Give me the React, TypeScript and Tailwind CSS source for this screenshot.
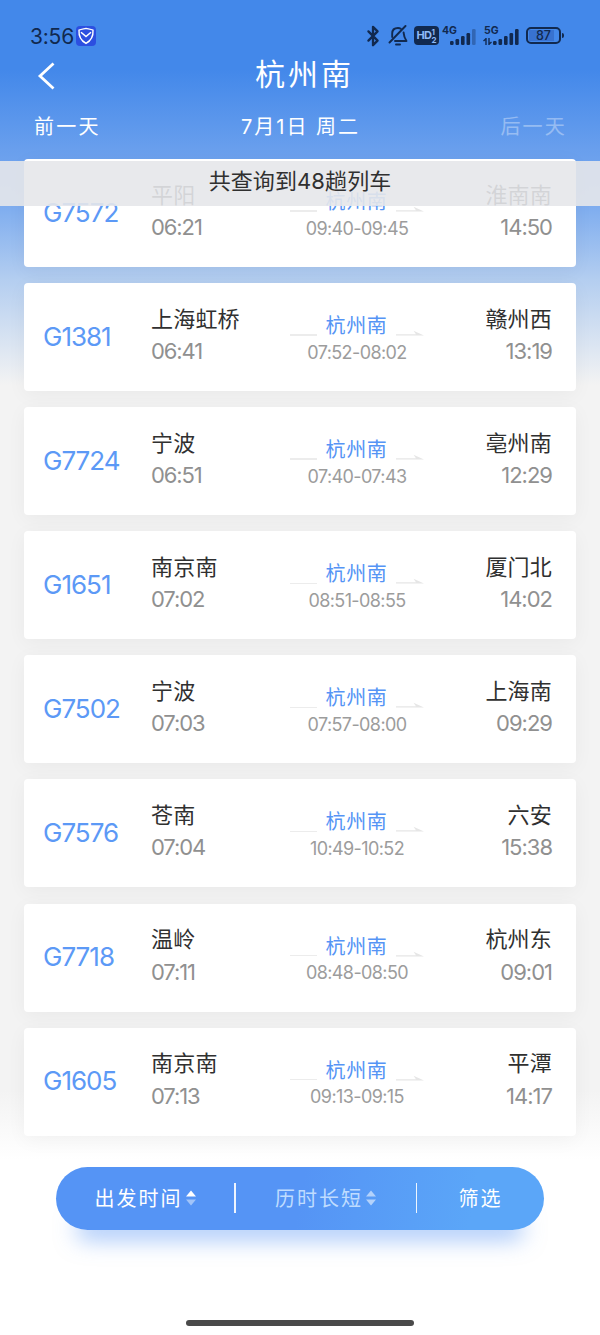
import React from 'react';
import { Bluetooth } from 'lucide-react';

interface Train {
  code: string;
  from: string;
  depart: string;
  to: string;
  arrive: string;
  stop: string;
}

const STATION = '杭州南';

const trains: Train[] = [
  { code: 'G7572', from: '平阳', depart: '06:21', to: '淮南南', arrive: '14:50', stop: '09:40-09:45' },
  { code: 'G1381', from: '上海虹桥', depart: '06:41', to: '赣州西', arrive: '13:19', stop: '07:52-08:02' },
  { code: 'G7724', from: '宁波', depart: '06:51', to: '亳州南', arrive: '12:29', stop: '07:40-07:43' },
  { code: 'G1651', from: '南京南', depart: '07:02', to: '厦门北', arrive: '14:02', stop: '08:51-08:55' },
  { code: 'G7502', from: '宁波', depart: '07:03', to: '上海南', arrive: '09:29', stop: '07:57-08:00' },
  { code: 'G7576', from: '苍南', depart: '07:04', to: '六安', arrive: '15:38', stop: '10:49-10:52' },
  { code: 'G7718', from: '温岭', depart: '07:11', to: '杭州东', arrive: '09:01', stop: '08:48-08:50' },
  { code: 'G1605', from: '南京南', depart: '07:13', to: '平潭', arrive: '14:17', stop: '09:13-09:15' },
];

const SignalBars: React.FC<{ weak?: boolean }> = ({ weak }) => (
  <svg width="26" height="16" viewBox="0 0 26 16" fill="#11294f">
    <rect x="0" y="12" width="3.6" height="4" rx="1.2" />
    <rect x="5.5" y="10" width="3.6" height="6" rx="1.2" />
    <rect x="11" y="7" width="3.6" height="9" rx="1.2" />
    <rect x="16.5" y="4" width="3.6" height="12" rx="1.2" />
    <rect x="22" y="0" width="3.6" height="16" rx="1.2" opacity={weak ? 0.35 : 1} />
  </svg>
);

const StatusBar: React.FC = () => (
  <div className="flex h-[56px] items-center pl-[30px] pr-9 pt-[15px] text-[#11294f]">
    <span className="mt-[1px] w-[46px] text-[21px] leading-none tracking-[-0.2px]">3:56</span>
    <svg width="20" height="20" viewBox="0 0 20 20" fill="none">
      <rect width="20" height="20" rx="4" fill="#2c4fe0" />
      <path d="M10 2.4 C12.5 3 15 3.2 17 4.2 C17.4 10 14.6 14.8 10 17.4 C5.4 14.8 2.6 10 3 4.2 C5 3.2 7.5 3 10 2.4 Z" stroke="#fff" strokeWidth="1.4" />
      <path d="M5 6.2 L10 10.5 L15 6.2" stroke="#fff" strokeWidth="1.5" />
    </svg>
    <div className="ml-auto flex items-center">
      <Bluetooth size={22} strokeWidth={2.5} className="mr-[4px]" />
      <svg width="20" height="21" viewBox="0 0 20 21" fill="none" stroke="#11294f" strokeWidth="1.9" strokeLinecap="round" strokeLinejoin="round">
        <path d="M4.2 12 V8.5 C4.2 5 6.3 3 10 3 C11 3 12 3.2 12.8 3.7" />
        <path d="M15.6 7.4 C15.8 10 15.8 12 18.5 16 H7" />
        <path d="M17.5 1 L1.5 17.5" />
        <path d="M8 19.5 H12" />
      </svg>
      <div className="ml-[6px] flex h-[19px] w-[25px] items-center justify-center rounded-[4px] bg-[#11294f] text-[#8fbaf7]">
        <span className="text-[11px] font-bold leading-none tracking-[-0.5px]">HD</span>
        <span className="flex flex-col text-[8px] font-bold leading-[8px]">
          <span>1</span>
          <span>2</span>
        </span>
      </div>
      <div className="relative ml-[3px] flex h-[18px] w-[34px] items-end justify-end">
        <span className="absolute left-0 top-[-1px] text-[10.5px] font-bold leading-none">4G</span>
        <SignalBars weak />
      </div>
      <div className="relative ml-[7px] flex h-[18px] w-[36px] items-end justify-end">
        <span className="absolute left-[1px] top-[-1px] text-[10.5px] font-bold leading-none">5G</span>
        <svg className="absolute bottom-0 left-0" width="9" height="7" viewBox="0 0 9 7" fill="none" stroke="#11294f" strokeWidth="1.4">
          <path d="M3 0 V7 M0.5 3 L3 0.8 M6 0 V7 M8.5 4 L6 6.2" />
        </svg>
        <SignalBars />
      </div>
      <div className="ml-[7px] flex h-[17px] w-[35px] items-center justify-center rounded-[5px] border-2 border-[#11294f] p-[1px]">
        <div className="flex h-full w-full items-center justify-center bg-[linear-gradient(90deg,#3872d0_87%,transparent_87%)] pt-[1px] text-[12.5px] font-medium leading-none">87</div>
      </div>
      <div className="ml-[1px] h-[5px] w-[2px] rounded-r bg-[#11294f]" />
    </div>
  </div>
);

const TrainCard: React.FC<{ train: Train }> = ({ train }) => (
  <div className="grid h-[108px] shrink-0 grid-cols-[127px_139px_134px_1fr] rounded-[4px] bg-white shadow-[0_4px_20px_rgba(0,0,0,0.045)]">
    <div className="flex items-center pb-[2px] pl-[19px] text-[26px] tracking-[-1px] text-[#5c99f6]">{train.code}</div>
    <div className="flex flex-col pt-[19.5px]">
      <span className="text-[22px] leading-8 tracking-[0.2px] text-[#303030]">{train.from}</span>
      <span className="mt-[0.5px] text-[22px] leading-8 tracking-[-1.1px] text-[#909090]">{train.depart}</span>
    </div>
    <div className="flex flex-col items-center pt-[28px]">
      <div className="flex h-[30px] w-full items-center justify-between">
        <div className="mt-[18px] h-[1.5px] w-[27px] bg-[#ececec]" />
        <span className="text-[20px] leading-[30px] tracking-[0.6px] text-[#5594f5]">{STATION}</span>
        <svg className="mt-[14px]" width="28" height="6" viewBox="0 0 28 6">
          <path d="M0 4.2 H20 L17.5 0.8 L28 5.5 H0 Z" fill="#e6e6e6" />
        </svg>
      </div>
      <span className="mt-[-0.5px] text-[18px] leading-6 tracking-[-0.6px] text-[#9c9c9c]">{train.stop}</span>
    </div>
    <div className="flex flex-col items-end pr-6 pt-[19.5px]">
      <span className="text-[22px] leading-8 tracking-[0.2px] text-[#303030]">{train.to}</span>
      <span className="mt-[0.5px] text-[22px] leading-8 tracking-[-1px] text-[#909090]">{train.arrive}</span>
    </div>
  </div>
);

const SortArrows: React.FC<{ active?: boolean }> = ({ active }) => (
  <svg width="10" height="16" viewBox="0 0 10 16" fill="#fff">
    <path d="M5 0.5 L10 6.5 H0 Z" opacity={active ? 1 : 0.55} />
    <path d="M5 15.5 L10 9.5 H0 Z" opacity={active ? 0.45 : 0.55} />
  </svg>
);

const App: React.FC = () => {
  return (
    <div className="relative flex h-[1335px] w-[600px] flex-col overflow-hidden bg-[linear-gradient(180deg,#4388ea_0px,#4388ea_70px,#699fed_150px,#7dacef_205px,#b4cef0_280px,#f3f3f3_385px,#f3f3f3_1090px,#ffffff_1160px)] font-['Inter','Noto_Sans_CJK_SC',sans-serif]">
      <StatusBar />

      <div className="grid h-10 grid-cols-3 items-center text-white">
        <svg className="ml-[37px]" width="18" height="28" viewBox="0 0 18 28" fill="none" stroke="#fff" strokeWidth="2.8">
          <path d="M16.5 1.5 L3 14 L16.5 26.5" />
        </svg>
        <h1 className="mt-[-4px] pl-[9px] text-center text-[30px] leading-9 tracking-[3px]">{STATION}</h1>
      </div>

      <div className="flex h-[63px] items-start justify-between pl-[34px] pr-[33px] pt-[15.5px] text-[20px] leading-[30px] tracking-[2.2px] text-white">
        <span>前一天</span>
        <span className="tracking-[2px]">7月1日 周二</span>
        <span className="opacity-35">后一天</span>
      </div>

      <div className="flex flex-col gap-[16.1px] px-6">
        {trains.map((train) => (
          <TrainCard key={train.code} train={train} />
        ))}
      </div>

      <div className="absolute inset-x-0 top-[161px] flex h-[45px] items-center justify-center bg-[#e6e7ea]/90 text-[22px] leading-none tracking-[0.1px] text-[#303030]">
        <span className="mt-[-5px]">共查询到48趟列车</span>
      </div>

      <div className="mx-[56px] mt-[31px] flex h-[63px] shrink-0 items-center rounded-full bg-[linear-gradient(100deg,#5594f5_50%,#5ba6f8_85%)] text-[20px] tracking-[2px] text-white shadow-[0_30px_22px_-20px_rgba(85,148,245,0.5)]">
        <div className="flex w-[178px] items-center justify-center gap-[3px]">
          <span className="pt-[2px]">出发时间</span>
          <SortArrows active />
        </div>
        <div className="h-[30px] w-[1.5px] bg-white/90" />
        <div className="flex w-[180px] items-center justify-center gap-[3px]">
          <span className="pt-[2px] text-[#bfdcff]">历时长短</span>
          <SortArrows />
        </div>
        <div className="h-[30px] w-[1.5px] bg-white/90" />
        <div className="flex-1 pt-[2px] text-center">筛选</div>
      </div>

      <div className="mx-auto mb-[9px] mt-auto h-[6px] w-[228px] rounded-full bg-[#4a4a4a]" />
    </div>
  );
};

export default App;
